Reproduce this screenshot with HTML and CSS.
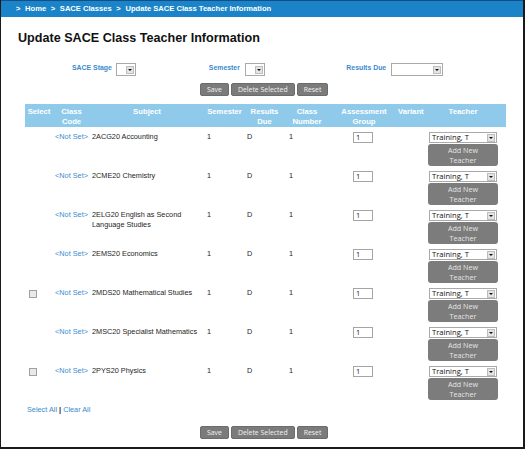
FILE: index.html
```html
<!DOCTYPE html>
<html>
<head>
<meta charset="utf-8">
<link rel="stylesheet" href="styles.css">
</head>
<body>
<div class="page">
  <div class="crumbs"><span class="sep first">&gt;</span> Home <span class="sep">&gt;</span> SACE Classes <span class="sep">&gt;</span> Update SACE Class Teacher Information</div>
  <h1 class="title">Update SACE Class Teacher Information</h1>

  <div class="filters">
    <div class="fgroup g1"><span class="flabel">SACE Stage</span><span class="sel fsel small"><span class="seltext"></span><span class="arrow"></span></span></div>
    <div class="fgroup g2"><span class="flabel">Semester</span><span class="sel fsel small"><span class="seltext"></span><span class="arrow"></span></span></div>
    <div class="fgroup g3"><span class="flabel">Results Due</span><span class="sel fsel wide"><span class="seltext"></span><span class="arrow"></span></span></div>
  </div>

  <div class="actions top">
    <button class="btn">Save</button>
    <button class="btn">Delete Selected</button>
    <button class="btn">Reset</button>
  </div>

  <table class="grid">
    <colgroup>
      <col class="c-sel"><col class="c-code"><col class="c-subj"><col class="c-sem"><col class="c-due"><col class="c-num"><col class="c-grp"><col class="c-var"><col class="c-tch">
    </colgroup>
    <thead>
      <tr>
        <th>Select</th><th>Class<br>Code</th><th>Subject</th><th>Semester</th><th>Results<br>Due</th><th>Class<br>Number</th><th>Assessment<br>Group</th><th>Variant</th><th>Teacher</th>
      </tr>
    </thead>
    <tbody>
      <tr>
        <td class="t-sel"></td><td class="t-code"><a class="link">&lt;Not Set&gt;</a></td><td class="t-subj">2ACG20 Accounting</td><td class="t-sem">1</td><td class="t-due">D</td><td class="t-num">1</td>
        <td class="t-grp"><span class="inp">1</span></td><td></td>
        <td class="t-tch"><span class="sel tsel"><span class="seltext">Training, T</span><span class="arrow"></span></span><div class="addbtn">Add New<br>Teacher</div></td>
      </tr>
      <tr>
        <td class="t-sel"></td><td class="t-code"><a class="link">&lt;Not Set&gt;</a></td><td class="t-subj">2CME20 Chemistry</td><td class="t-sem">1</td><td class="t-due">D</td><td class="t-num">1</td>
        <td class="t-grp"><span class="inp">1</span></td><td></td>
        <td class="t-tch"><span class="sel tsel"><span class="seltext">Training, T</span><span class="arrow"></span></span><div class="addbtn">Add New<br>Teacher</div></td>
      </tr>
      <tr>
        <td class="t-sel"></td><td class="t-code"><a class="link">&lt;Not Set&gt;</a></td><td class="t-subj">2ELG20 English as Second Language Studies</td><td class="t-sem">1</td><td class="t-due">D</td><td class="t-num">1</td>
        <td class="t-grp"><span class="inp">1</span></td><td></td>
        <td class="t-tch"><span class="sel tsel"><span class="seltext">Training, T</span><span class="arrow"></span></span><div class="addbtn">Add New<br>Teacher</div></td>
      </tr>
      <tr>
        <td class="t-sel"></td><td class="t-code"><a class="link">&lt;Not Set&gt;</a></td><td class="t-subj">2EMS20 Economics</td><td class="t-sem">1</td><td class="t-due">D</td><td class="t-num">1</td>
        <td class="t-grp"><span class="inp">1</span></td><td></td>
        <td class="t-tch"><span class="sel tsel"><span class="seltext">Training, T</span><span class="arrow"></span></span><div class="addbtn">Add New<br>Teacher</div></td>
      </tr>
      <tr>
        <td class="t-sel"><span class="chk"></span></td><td class="t-code"><a class="link">&lt;Not Set&gt;</a></td><td class="t-subj">2MDS20 Mathematical Studies</td><td class="t-sem">1</td><td class="t-due">D</td><td class="t-num">1</td>
        <td class="t-grp"><span class="inp">1</span></td><td></td>
        <td class="t-tch"><span class="sel tsel"><span class="seltext">Training, T</span><span class="arrow"></span></span><div class="addbtn">Add New<br>Teacher</div></td>
      </tr>
      <tr>
        <td class="t-sel"></td><td class="t-code"><a class="link">&lt;Not Set&gt;</a></td><td class="t-subj">2MSC20 Specialist Mathematics</td><td class="t-sem">1</td><td class="t-due">D</td><td class="t-num">1</td>
        <td class="t-grp"><span class="inp">1</span></td><td></td>
        <td class="t-tch"><span class="sel tsel"><span class="seltext">Training, T</span><span class="arrow"></span></span><div class="addbtn">Add New<br>Teacher</div></td>
      </tr>
      <tr>
        <td class="t-sel"><span class="chk"></span></td><td class="t-code"><a class="link">&lt;Not Set&gt;</a></td><td class="t-subj">2PYS20 Physics</td><td class="t-sem">1</td><td class="t-due">D</td><td class="t-num">1</td>
        <td class="t-grp"><span class="inp">1</span></td><td></td>
        <td class="t-tch"><span class="sel tsel"><span class="seltext">Training, T</span><span class="arrow"></span></span><div class="addbtn">Add New<br>Teacher</div></td>
      </tr>
    </tbody>
  </table>

  <div class="selectall"><a class="link">Select All</a> <span class="bar">|</span> <a class="link">Clear All</a></div>

  <div class="actions bottom">
    <button class="btn">Save</button>
    <button class="btn">Delete Selected</button>
    <button class="btn">Reset</button>
  </div>
</div>
</body>
</html>
```

FILE: styles.css
```css
html, body {
  margin: 0;
  padding: 0;
  background: #ffffff;
}

.page {
  width: 525px;
  height: 449px;
  box-sizing: border-box;
  border-left: 1px solid #1a1a1a;
  border-right: 2px solid #1a1a1a;
  border-bottom: 2px solid #1a1a1a;
  overflow: hidden;
  font-family: "Liberation Sans", Arial, sans-serif;
  background: #ffffff;
}

.crumbs {
  height: 16px;
  border-top: 1px solid #134f86;
  background: #1b84c9;
  color: #ffffff;
  font: bold 7.6px/16px "Liberation Sans", Arial, sans-serif;
  padding-left: 15px;
  white-space: nowrap;
}

.crumbs .sep {
  padding: 0 2.5px;
}

.crumbs .sep.first {
  padding-left: 0;
}

.title {
  margin: 14px 0 0 17px;
  font: bold 12.6px/15px "Liberation Sans", Arial, sans-serif;
  color: #111111;
}

.filters {
  display: flex;
  align-items: center;
  height: 13px;
  margin-top: 17px;
}

.fgroup {
  display: flex;
  align-items: center;
  gap: 4px;
}

.g1 { margin-left: 71px; }
.g2 { margin-left: 73px; gap: 5.5px; }
.g3 { margin-left: 81px; gap: 5px; }

.flabel {
  font: bold 6.9px/9px "Liberation Sans", Arial, sans-serif;
  color: #3b8bcd;
  white-space: nowrap;
  margin-top: -4px;
}

.sel {
  display: flex;
  align-items: center;
  box-sizing: border-box;
  background: #ffffff;
  border: 1px solid #a9a9a9;
}

.fsel {
  height: 13px;
}

.fsel.small { width: 20px; }
.fsel.wide { width: 52px; }

.seltext {
  flex: 1;
  overflow: hidden;
  white-space: nowrap;
}

.arrow {
  position: relative;
  width: 8px;
  height: 8px;
  margin-right: 1px;
  box-sizing: border-box;
  background: #e4e4e4;
  border: 1px solid #bdbdbd;
}

.arrow::after {
  content: "";
  position: absolute;
  left: 1px;
  top: 2px;
  border-left: 2px solid transparent;
  border-right: 2px solid transparent;
  border-top: 2px solid #111111;
}

.actions {
  display: flex;
  gap: 2px;
  margin-left: 199px;
}

.actions.top { margin-top: 7px; }
.actions.bottom { margin-top: 11px; }

.btn {
  height: 13px;
  margin: 0;
  padding: 0 6px;
  box-sizing: border-box;
  border: 1px solid #6c6c6c;
  border-radius: 2px;
  background: #7b7b7b;
  color: #f2f2f2;
  font: 6.9px/11px "Open Sans", sans-serif;
}

.grid {
  margin-top: 8px;
  margin-left: 24px;
  width: 481px;
  table-layout: fixed;
  border-collapse: collapse;
  border-spacing: 0;
}

.c-sel { width: 28px; }
.c-code { width: 37px; }
.c-subj { width: 114px; }
.c-sem { width: 41px; }
.c-due { width: 39px; }
.c-num { width: 46px; }
.c-grp { width: 68px; }
.c-var { width: 22px; }
.c-tch { width: 86px; }

.grid th {
  height: 23px;
  box-sizing: border-box;
  padding: 3px 0 0;
  vertical-align: top;
  background: #8fcaea;
  color: #ffffff;
  font: bold 7.7px/9.5px "Liberation Sans", Arial, sans-serif;
  text-align: center;
  white-space: nowrap;
}

.grid td {
  padding: 5px 0 0;
  vertical-align: top;
  font: 7.3px/9.5px "Liberation Sans", Arial, sans-serif;
  color: #1e1e1e;
}

.link {
  color: #3b8bcd;
}

.t-code { text-align: center; white-space: nowrap; }
.grid td.t-subj { padding-left: 2px; padding-right: 4px; }
.grid td.t-sem { padding-left: 3px; }
.grid td.t-due { padding-left: 2px; }
.grid td.t-num { padding-left: 5px; }
.grid td.t-grp { padding-left: 23px; }
.grid td.t-tch { padding-left: 9px; }

.chk {
  display: block;
  width: 8px;
  height: 8px;
  margin: 2px 0 0 4px;
  box-sizing: border-box;
  border: 1px solid #a0a0a0;
  background: #e9e9e9;
}

.inp {
  display: block;
  width: 20px;
  height: 11px;
  box-sizing: border-box;
  border: 1px solid #a5a5a5;
  padding-left: 2px;
  font: 7.4px/9px "Open Sans", sans-serif;
  color: #111111;
}

.tsel {
  width: 68px;
  height: 11px;
}

.tsel .seltext {
  padding-left: 2px;
  font: 7.6px/9px "Open Sans", sans-serif;
  color: #111111;
}

.addbtn {
  width: 70px;
  height: 22px;
  margin: 1px 0 0 -1px;
  box-sizing: border-box;
  padding-top: 1px;
  border-radius: 3px;
  background: #7c7c7c;
  color: #e4e4e4;
  font: 7.2px/10px "Open Sans", sans-serif;
  text-align: center;
}

.selectall {
  margin: 5px 0 0 26px;
  font: 7.3px/9.5px "Liberation Sans", Arial, sans-serif;
}

.selectall .bar {
  color: #222222;
  font-weight: bold;
}
```
